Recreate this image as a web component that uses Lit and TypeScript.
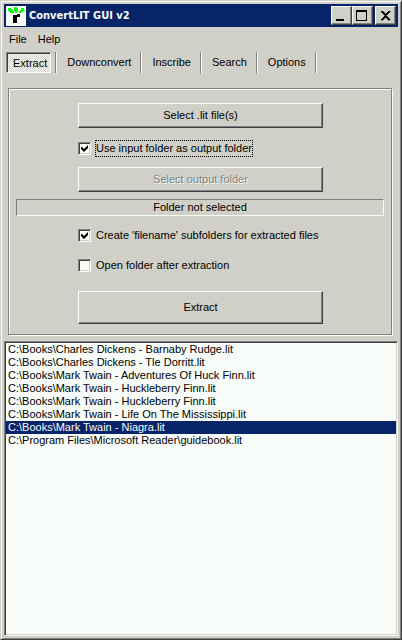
import { LitElement, html, css, svg } from "lit";
import { customElement, state } from "lit/decorators.js";

const FILES = [
  "C:\\Books\\Charles Dickens - Barnaby Rudge.lit",
  "C:\\Books\\Charles Dickens - Tle Dorritt.lit",
  "C:\\Books\\Mark Twain - Adventures Of Huck Finn.lit",
  "C:\\Books\\Mark Twain - Huckleberry Finn.lit",
  "C:\\Books\\Mark Twain - Huckleberry Finn.lit",
  "C:\\Books\\Mark Twain - Life On The Mississippi.lit",
  "C:\\Books\\Mark Twain - Niagra.lit",
  "C:\\Program Files\\Microsoft Reader\\guidebook.lit",
];
const TABS = ["Extract", "Downconvert", "Inscribe", "Search", "Options"];

const logo = svg`
  <rect width="20" height="20" fill="#f8fcf8"/>
  <path fill="#08fc08" d="M2 2h3v1h1v1h1v1h1v2H4V6H3V5H2zM8 1h3v1h1v4h-1v1H9V5H8zM15 2h3v2h1v1h-2v1h-1v1h-3V5h1V4h1z"/>
  <path fill="#000" d="M7 9h4V8h3v3h-3v6H7z"/>`;

@customElement("app-root")
export class AppRoot extends LitElement {
  @state() private tab = 0;

  static styles = css`
    :host {
      --face: #d0d0c8;
      --light: #f8fcf8;
      --shadow: #808080;
      --dark: #404040;
      --navy: #082468;
      display: block;
      font: 11px/13px "Liberation Sans", Arial, sans-serif;
      color: #000;
    }
    * { box-sizing: border-box; }
    button, select { font: inherit; color: inherit; margin: 0; }
    .window {
      display: flex;
      flex-direction: column;
      min-height: 100vh;
      padding: 3px;
      background: var(--face);
      border: 1px solid;
      border-color: var(--face) var(--dark) var(--dark) var(--face);
      box-shadow: inset 1px 1px var(--light), inset -1px -1px var(--shadow);
    }
    .title {
      display: flex;
      align-items: center;
      height: 23px;
      padding: 0 2px;
      background: var(--navy);
      color: var(--light);
    }
    .title svg { display: block; }
    .logo { width: 20px; height: 20px; }
    h1 {
      flex: 1;
      margin: 0;
      padding-left: 3px;
      font: bold 11px/20px "DejaVu Sans Condensed", Tahoma, sans-serif;
    }
    .raised {
      background: var(--face);
      border: 1px solid;
      border-color: var(--light) var(--dark) var(--dark) var(--light);
      box-shadow: inset -1px -1px var(--shadow);
      border-radius: 0;
      padding: 0;
    }
    .control { width: 21px; height: 19px; }
    .close { margin-left: 2px; }
    .menu { display: flex; height: 25px; align-items: center; }
    .menu button { border: 0; background: none; padding: 0 6px 0 5px; }
    .tabs { display: flex; height: 21px; padding-left: 2px; }
    .item {
      display: flex;
      margin-right: 1px;
      border-right: 1px solid var(--shadow);
      box-shadow: 1px 0 var(--light);
    }
    .item:first-child { padding-right: 4px; }
    .tab { border: 0; background: none; padding: 0 9px 0 10px; }
    .item:first-child .tab { padding: 0 4px 0 5px; }
    .item .tab.on {
      padding: 2px 3px 0 6px;
      border: 1px solid;
      border-color: var(--shadow) var(--light) var(--light) var(--shadow);
      box-shadow: inset 1px 1px var(--dark);
      background: repeating-conic-gradient(var(--light) 0 25%, var(--face) 0 50%) 0 0 / 2px 2px;
    }
    .panel {
      display: flex;
      flex-direction: column;
      margin: 15px 6px 6px 4px;
      padding: 14px 7px 10px;
      border: 1px solid var(--shadow);
      box-shadow: inset 1px 1px var(--light), 1px 1px var(--light);
    }
    .column { display: flex; flex-direction: column; margin: 0 61px 0 62px; }
    .push { height: 25px; }
    .big { height: 33px; margin-top: 4px; }
    .push:disabled { color: var(--shadow); text-shadow: 1px 1px var(--light); }
    .check {
      display: flex;
      align-items: center;
      height: 17px;
      margin: 12px 0 10px;
      white-space: nowrap;
    }
    .check input {
      appearance: none;
      display: grid;
      width: 13px;
      height: 13px;
      margin: 0 4px 0 0;
      background: var(--light);
      border: 1px solid;
      border-color: var(--shadow) var(--light) var(--light) var(--shadow);
      box-shadow: inset 1px 1px var(--dark), inset -1px -1px var(--face);
    }
    .check input:checked::before {
      content: "";
      width: 7px;
      height: 7px;
      margin: 2px;
      background: #000;
      clip-path: polygon(0 2px, 1px 2px, 3px 4px, 7px 0, 7px 3px, 3px 7px, 0 4px);
    }
    .check span { padding: 1px 0; border: 1px dotted transparent; }
    .focus span { border-color: #000; }
    .options .check { margin: 0 0 13px; }
    .status {
      height: 17px;
      margin: 7px 0 11px;
      line-height: 15px;
      text-align: center;
      border: 1px solid;
      border-color: var(--shadow) var(--light) var(--light) var(--shadow);
    }
    .files {
      flex: 1;
      appearance: none;
      width: 100%;
      padding: 1px;
      border: 1px solid;
      border-color: var(--shadow) var(--light) var(--light) var(--shadow);
      border-radius: 0;
      box-shadow: inset 1px 1px var(--dark), inset -1px -1px var(--face);
      background: var(--light);
      outline: 0;
      overflow: hidden;
    }
    option { height: 13px; min-height: 13px; padding: 0 2px; line-height: 13px; }
    option:checked {
      background: linear-gradient(var(--navy), var(--navy));
      -webkit-text-fill-color: var(--light);
    }
  `;

  render() {
    return html`
      <div class="window">
        <header class="title">
          <svg class="logo" viewBox="0 0 20 20" shape-rendering="crispEdges" aria-hidden="true">${logo}</svg>
          <h1>ConvertLIT GUI v2</h1>
          <button class="raised control" aria-label="Minimize">
            <svg width="19" height="17" aria-hidden="true"><path d="M4 12h8v2H4z"/></svg>
          </button>
          <button class="raised control" aria-label="Maximize">
            <svg width="19" height="17" aria-hidden="true"><path fill-rule="evenodd" d="M3 3h11v11H3zM4 5v8h9V5z"/></svg>
          </button>
          <button class="raised control close" aria-label="Close">
            <svg width="19" height="17" shape-rendering="crispEdges" aria-hidden="true">
              <path d="M5 4h2v1h1v1h1v1h1V6h1V5h1V4h2v1h-1v1h-1v1h-1v1h-1v1h1v1h1v1h1v1h1v1h-2v-1h-1v-1h-1v-1H9v1H8v1H7v1H5v-1h1v-1h1v-1h1V9h1V8H8V7H7V6H6V5H5z" stroke="#000" stroke-width="0.4"/>
            </svg>
          </button>
        </header>
        <nav class="menu"><button>File</button><button>Help</button></nav>
        <div class="tabs" role="tablist">
          ${TABS.map(
            (name, i) => html`<div class="item" role="presentation"><button
              role="tab"
              class="tab ${this.tab === i ? "on" : ""}"
              aria-selected=${this.tab === i}
              @click=${() => (this.tab = i)}
            >${name}</button></div>`
          )}
        </div>
        <main class="panel">
          <div class="column">
            <button class="raised push">Select .lit file(s)</button>
            <label class="check focus"><input type="checkbox" checked /><span>Use input folder as output folder</span></label>
            <button class="raised push" disabled>Select output folder</button>
          </div>
          <div class="status">Folder not selected</div>
          <div class="column options">
            <label class="check"><input type="checkbox" checked /><span>Create 'filename' subfolders for extracted files</span></label>
            <label class="check"><input type="checkbox" /><span>Open folder after extraction</span></label>
            <button class="raised push big">Extract</button>
          </div>
        </main>
        <select class="files" size="8" aria-label="Selected files">
          ${FILES.map((f, i) => html`<option ?selected=${i === 6}>${f}</option>`)}
        </select>
      </div>
    `;
  }
}
